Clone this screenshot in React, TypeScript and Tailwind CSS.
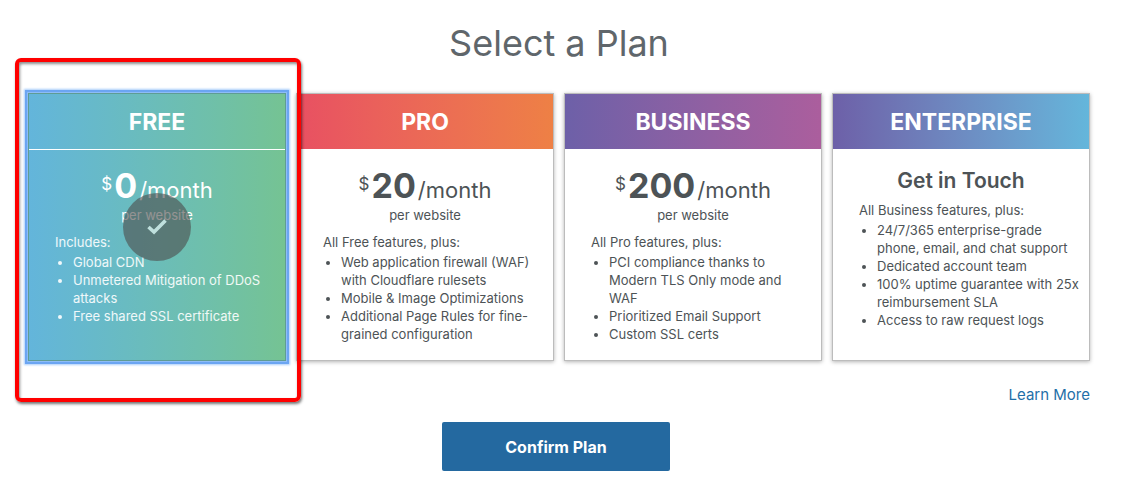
import { useState } from "react";

type Plan = {
  id: string;
  name: string;
  price?: string;
  intro: string;
  features: string[];
  gradient: string;
};

const plans: Plan[] = [
  {
    id: "free",
    name: "FREE",
    price: "0",
    intro: "Includes:",
    features: ["Global CDN", "Unmetered Mitigation of DDoS attacks", "Free shared SSL certificate"],
    gradient: "bg-linear-to-r from-[#63b5db] to-[#75c393]",
  },
  {
    id: "pro",
    name: "PRO",
    price: "20",
    intro: "All Free features, plus:",
    features: [
      "Web application firewall (WAF) with Cloudflare rulesets",
      "Mobile & Image Optimizations",
      "Additional Page Rules for fine-grained configuration",
    ],
    gradient: "bg-linear-to-r from-[#e85062] to-[#ee8045]",
  },
  {
    id: "business",
    name: "BUSINESS",
    price: "200",
    intro: "All Pro features, plus:",
    features: [
      "PCI compliance thanks to Modern TLS Only mode and WAF",
      "Prioritized Email Support",
      "Custom SSL certs",
    ],
    gradient: "bg-linear-to-r from-[#6d60a8] to-[#ab5e9d]",
  },
  {
    id: "enterprise",
    name: "ENTERPRISE",
    intro: "All Business features, plus:",
    features: [
      "24/7/365 enterprise-grade phone, email, and chat support",
      "Dedicated account team",
      "100% uptime guarantee with 25x reimbursement SLA",
      "Access to raw request logs",
    ],
    gradient: "bg-linear-to-r from-[#6d60a8] to-[#64b6db]",
  },
];

function PlanCard({ plan, selected, onSelect }: { plan: Plan; selected: boolean; onSelect: () => void }) {
  const frame = selected
    ? `border-[#5f9c94] text-white shadow-[0_0_0_1px_#8dbcf7,0_0_0_3px_#6ba5f2,0_0_2px_4px_#a9cdfa] ${plan.gradient}`
    : "border-[#bcbcbc] bg-white text-[#4d5356] shadow-[0_1px_4px_rgba(0,0,0,0.3)]";
  return (
    <label className={`relative flex h-full cursor-pointer flex-col border ${frame}`}>
      <input type="radio" name="plan" value={plan.id} checked={selected} onChange={onSelect} className="sr-only" />
      <h2
        className={`flex h-14 items-center justify-center border-b border-white pt-px text-[23px] font-bold text-white ${
          selected ? "" : plan.gradient
        }`}
      >
        {plan.name}
      </h2>
      <div className="pt-[15px] pb-[17px]">
        {plan.price ? (
          <div className="mb-[9px] text-center">
            <p className="flex h-[41px] items-baseline justify-center leading-[41px]">
              <span className="relative -top-2 text-[17px]">$</span>
              <span className="px-0.5 text-[34px] font-bold">{plan.price}</span>
              <span className="text-[22px]">/month</span>
            </p>
            <p className="text-[13px] leading-[18px]">per website</p>
          </div>
        ) : (
          <p className="mb-1 text-center text-[21px] leading-8 font-semibold">Get in Touch</p>
        )}
        <div className={`pr-2 pl-[26px] text-[13px] leading-[18px] ${selected ? "text-white/90" : ""}`}>
          <p className="mb-0.5">{plan.intro}</p>
          <ul className="list-disc pl-[18px]">
            {plan.features.map((feature) => (
              <li key={feature}>{feature}</li>
            ))}
          </ul>
        </div>
      </div>
      {selected && (
        <span className="absolute inset-0 flex items-center justify-center">
          <span className="flex size-[68px] items-center justify-center rounded-full bg-[#4c4b4b]/60">
            <svg viewBox="0 0 20 16" className="h-4 w-5" fill="none" stroke="#bfe0dd" strokeWidth="3.6">
              <path d="M1.5 8 7 13 18.5 1.5" />
            </svg>
          </span>
        </span>
      )}
    </label>
  );
}

export default function App() {
  const [selected, setSelected] = useState("free");
  return (
    <main className="bg-white pt-5 pr-12 pb-6 pl-7 font-['Inter',sans-serif]">
      <h1 className="text-center text-[36px] leading-[46px] font-normal text-[#5f666b]">Select a Plan</h1>
      <div className="mt-[27px] grid grid-cols-4 gap-2.5">
        {plans.map((plan) => (
          <div key={plan.id} className="relative">
            <PlanCard plan={plan} selected={selected === plan.id} onSelect={() => setSelected(plan.id)} />
            {plan.id === "free" && (
              <div className="pointer-events-none absolute -top-[35px] -right-[15px] -bottom-[41px] -left-[13px] z-10 rounded-md border-4 border-[#ff0000] shadow-[1px_2px_3px_rgba(0,0,0,0.55),inset_1px_2px_3px_rgba(0,0,0,0.45)]" />
            )}
          </div>
        ))}
      </div>
      <div className="mt-[21px] text-right">
        <a href="#plans" className="text-[15px] leading-6 text-[#1f6fa8]">
          Learn More
        </a>
      </div>
      <div className="mt-[15px] flex justify-center pr-1.5">
        <button type="button" className="h-[49px] w-[228px] rounded-xs bg-[#2469a0] text-base font-bold text-white">
          Confirm Plan
        </button>
      </div>
    </main>
  );
}
